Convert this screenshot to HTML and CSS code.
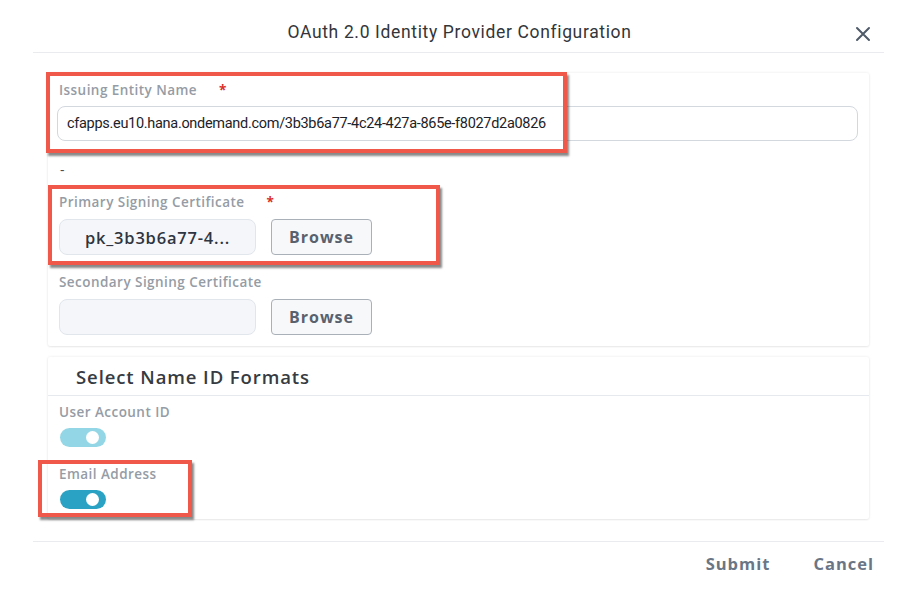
FILE: index.html
```html
<!DOCTYPE html>
<html>
<head>
<meta charset="utf-8">
<link rel="stylesheet" href="styles.css">
</head>
<body>
<div class="dialog">
  <header class="dlg-header">
    <h1 class="dlg-title">OAuth 2.0 Identity Provider Configuration</h1>
    <button class="close" aria-label="Close">
      <svg width="16" height="16" viewBox="0 0 16 16"><path d="M2 2 L14 14 M14 2 L2 14" stroke="#4f5b69" stroke-width="2" stroke-linecap="round"/></svg>
    </button>
  </header>

  <main class="dlg-content">
    <section class="card card-form">
      <label class="label">Issuing Entity Name <span class="req">*</span></label>
      <div class="text-input">cfapps.eu10.hana.ondemand.com/3b3b6a77-4c24-427a-865e-f8027d2a0826</div>
      <div class="dash">-</div>

      <label class="label label-cert">Primary Signing Certificate <span class="req">*</span></label>
      <div class="file-row">
        <div class="file-box">pk_3b3b6a77-4...</div>
        <button class="browse">Browse</button>
      </div>

      <label class="label label-cert2">Secondary Signing Certificate</label>
      <div class="file-row">
        <div class="file-box"></div>
        <button class="browse">Browse</button>
      </div>
    </section>

    <section class="card card-formats">
      <h2 class="card-title">Select Name ID Formats</h2>
      <div class="formats-body">
        <label class="label">User Account ID</label>
        <div class="toggle toggle-light"><span class="knob"></span></div>
        <label class="label label-email">Email Address</label>
        <div class="toggle toggle-on"><span class="knob"></span></div>
      </div>
    </section>
  </main>

  <footer class="dlg-footer">
    <button class="footer-btn">Submit</button>
    <button class="footer-btn">Cancel</button>
  </footer>
</div>

<div class="mark mark-1"></div>
<div class="mark mark-2"></div>
<div class="mark mark-3"></div>
</body>
</html>
```

FILE: styles.css
```css
* { box-sizing: border-box; }
html, body { margin: 0; padding: 0; background: #ffffff; }
body {
  width: 904px;
  height: 604px;
  overflow: hidden;
  position: relative;
  font-family: "Open Sans", "Noto Sans", sans-serif;
}

.dialog {
  margin-left: 33px;
  width: 851px;
}

.dlg-header {
  height: 53px;
  border-bottom: 1px solid #e9ebee;
  display: flex;
  align-items: center;
  justify-content: center;
  position: relative;
}
.dlg-title {
  margin: 0;
  padding-top: 12px;
  padding-left: 2px;
  font-family: "Roboto", sans-serif;
  font-weight: 400;
  font-size: 17.5px;
  color: #32363a;
  letter-spacing: 0.65px;
}
.close {
  position: absolute;
  right: 13px;
  top: 26px;
  border: 0;
  background: none;
  padding: 0;
  width: 16px;
  height: 16px;
  display: flex;
}

.dlg-content {
  padding: 20px 15px 0 15px;
  display: flex;
  flex-direction: column;
  gap: 11px;
}

.card {
  background: #ffffff;
  box-shadow: 0 0 3px rgba(0, 0, 0, 0.09), 0 1px 2px rgba(0, 0, 0, 0.06);
  border-radius: 2px;
}

.card-form {
  height: 273px;
  padding: 9px 11px 0 9px;
  display: flex;
  flex-direction: column;
}

.label {
  display: block;
  font-size: 13.5px;
  font-weight: 600;
  line-height: 16px;
  color: #959ca5;
  letter-spacing: 0.45px;
  padding-left: 2px;
}
.req {
  color: #d9312a;
  margin-left: 18px;
  font-weight: 700;
}

.text-input {
  margin-top: 8px;
  height: 35px;
  border: 1px solid #d3d8de;
  border-radius: 8px;
  display: flex;
  align-items: center;
  padding-left: 9px;
  font-family: "Roboto", sans-serif;
  font-size: 14.5px;
  letter-spacing: -0.3px;
  color: #1d2228;
}

.dash {
  margin-top: 20px;
  padding-left: 3px;
  font-size: 14px;
  line-height: 18px;
  color: #4a4f55;
}

.label-cert { margin-top: 15px; }
.label-cert2 { margin-top: 19px; }

.file-row {
  margin-top: 9px;
  display: flex;
  gap: 15px;
  padding-left: 2px;
}
.file-box {
  width: 197px;
  height: 36px;
  background: #f4f6f9;
  border: 1px solid #e1e6ec;
  border-radius: 8px;
  display: flex;
  align-items: center;
  justify-content: center;
  font-size: 16.5px;
  font-weight: 600;
  color: #2f3540;
  letter-spacing: 0.8px;
}
.browse {
  width: 101px;
  height: 36px;
  background: #f7f8f9;
  border: 1px solid #a9b0b8;
  border-radius: 4px;
  font-family: "Open Sans", sans-serif;
  font-size: 16px;
  font-weight: 700;
  color: #58626f;
  letter-spacing: 1px;
  padding: 0;
}

.card-formats {
  height: 162px;
}
.card-title {
  margin: 0;
  height: 39px;
  border-bottom: 1px solid #e6e9ed;
  padding-left: 28px;
  display: flex;
  align-items: center;
  font-size: 18.5px;
  font-weight: 600;
  color: #363b42;
  letter-spacing: 0.9px;
}
.formats-body {
  padding: 8px 0 0 9px;
}
.toggle {
  margin-top: 8px;
  margin-left: 3px;
  width: 46px;
  height: 19px;
  border-radius: 10px;
  position: relative;
}
.toggle-light { background: #93d7e6; }
.toggle-on { background: #2aa2c3; }
.knob {
  position: absolute;
  right: 7px;
  top: 3px;
  width: 13px;
  height: 13px;
  border-radius: 50%;
  background: #ffffff;
}
.label-email { margin-top: 19px; }

.dlg-footer {
  margin-top: 22px;
  border-top: 1px solid #e9ebee;
  height: 43px;
  display: flex;
  justify-content: flex-end;
  align-items: center;
  gap: 43px;
  padding-right: 10px;
}
.footer-btn {
  border: 0;
  background: none;
  padding: 0;
  font-family: "Open Sans", sans-serif;
  font-size: 16.5px;
  font-weight: 700;
  letter-spacing: 1px;
  color: #6a7685;
}

.mark {
  position: absolute;
  border: 4px solid #f0584a;
  box-shadow: 2px 3px 2px rgba(40, 40, 40, 0.55);
  pointer-events: none;
}
.mark-1 { left: 46px; top: 72px; width: 521px; height: 81px; }
.mark-2 { left: 48px; top: 185px; width: 392px; height: 80px; }
.mark-3 { left: 38px; top: 460px; width: 154px; height: 57px; }
```
